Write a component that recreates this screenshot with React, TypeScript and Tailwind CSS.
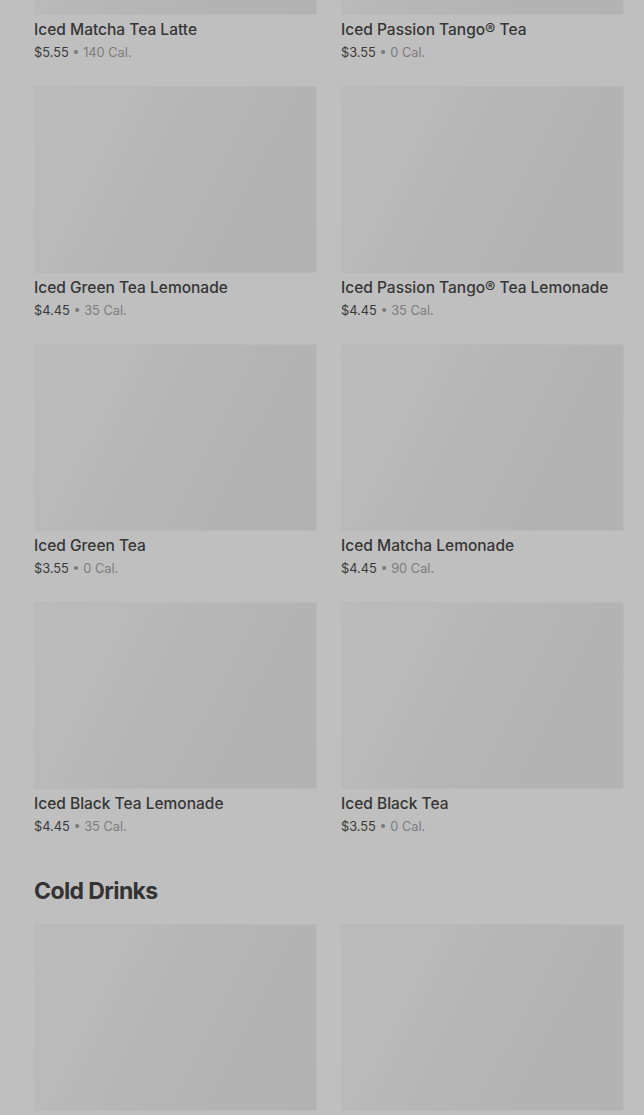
import React from "react";

type Item = { name: string; price: string; cal: string };

const tea: Item[] = [
  { name: "Iced Matcha Tea Latte", price: "$5.55", cal: "140 Cal." },
  { name: "Iced Passion Tango® Tea", price: "$3.55", cal: "0 Cal." },
  { name: "Iced Green Tea Lemonade", price: "$4.45", cal: "35 Cal." },
  { name: "Iced Passion Tango® Tea Lemonade", price: "$4.45", cal: "35 Cal." },
  { name: "Iced Green Tea", price: "$3.55", cal: "0 Cal." },
  { name: "Iced Matcha Lemonade", price: "$4.45", cal: "90 Cal." },
  { name: "Iced Black Tea Lemonade", price: "$4.45", cal: "35 Cal." },
  { name: "Iced Black Tea", price: "$3.55", cal: "0 Cal." },
];

function Placeholder() {
  return (
    <div className="h-[187px] w-full border border-[#b9b9b9] bg-[linear-gradient(117deg,#bbbbbb_0%,#b9b9b9_30%,#b6b6b6_45%,#b4b4b4_62%,#b2b2b2_100%)]" />
  );
}

function Card({ item }: { item: Item }) {
  return (
    <div className="flex flex-col">
      <Placeholder />
      <div className="mt-[5px] text-[15.5px] leading-[20px] font-medium text-[#363636] whitespace-nowrap">
        {item.name}
      </div>
      <div className="mt-[3px] text-[12.8px] leading-[20px] text-[#3a3a3a]">
        {item.price}
        <span className="text-[#7c7c7c]"> • {item.cal}</span>
      </div>
    </div>
  );
}

export default function App() {
  return (
    <div
      className="h-[1115px] w-[644px] overflow-hidden bg-[#bfbfbf] pl-[34px] pr-[20px]"
      style={{ fontFamily: "Inter, 'Noto Sans', sans-serif" }}
    >
      <div className="-mt-[172px] grid grid-cols-2 gap-x-[24px] gap-y-[23px]">
        {tea.map((t) => (
          <Card key={t.name} item={t} />
        ))}
      </div>
      <h2 className="mt-[38px] mb-[17px] h-[32px] text-[23px] leading-[32px] font-bold tracking-[-0.6px] text-[#333333]">
        Cold Drinks
      </h2>
      <div className="grid grid-cols-2 gap-x-[24px] gap-y-[23px]">
        <Placeholder />
        <Placeholder />
      </div>
    </div>
  );
}
